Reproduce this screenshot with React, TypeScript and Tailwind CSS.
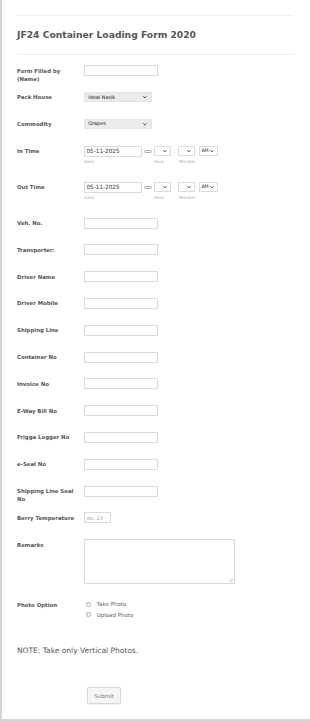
import React from "react";

type RowProps = {
  label: string;
  h?: string;
  children: React.ReactNode;
};

const Row: React.FC<RowProps> = ({ label, h = "h-[26.8px]", children }) => (
  <div className={`flex items-start pt-[8px] ${h}`}>
    <label className="w-[67px] shrink-0 pr-[5px] pt-[1.3px] text-[5.4px] font-bold leading-[8px] text-[#555]">
      {label}
    </label>
    {children}
  </div>
);

const Chevron = () => (
  <svg width="3.6" height="2.4" viewBox="0 0 6 4" className="shrink-0">
    <path d="M0.7 0.7 L3 3.1 L5.3 0.7" fill="none" stroke="#222" strokeWidth="1.6" />
  </svg>
);

const TextInput: React.FC<{ placeholder?: string; w?: string }> = ({ placeholder, w = "w-[73.7px]" }) => (
  <input
    placeholder={placeholder}
    className={`h-[11px] ${w} border border-[#dadada] bg-white px-[2px] text-[5.2px] text-[#333] outline-none placeholder:text-[#aaa]`}
  />
);

const SelectBox: React.FC<{ value: string }> = ({ value }) => (
  <div className="flex h-[10px] w-[67.7px] items-center justify-between border border-[#e2e2e2] bg-[#ebebeb] pl-[3.3px] pr-[4px]">
    <span className="text-[4.9px] leading-none text-[#111]">{value}</span>
    <Chevron />
  </div>
);

const MiniSelect: React.FC<{ w: string; value?: string }> = ({ w, value }) => (
  <div className={`flex h-[10.7px] ${w} items-center justify-end gap-[1.5px] border border-[#dcdcdc] bg-white pr-[3px]`}>
    {value && <span className="text-[4.7px] leading-none text-[#333]">{value}</span>}
    <Chevron />
  </div>
);

const SubLabel: React.FC<{ text: string; className?: string }> = ({ text, className = "" }) => (
  <span className={`mt-[2.5px] block text-[4.2px] leading-[5px] text-[#aaa] ${className}`}>{text}</span>
);

const TimeField = () => (
  <div className="flex items-start">
    <div className="flex flex-col">
      <input
        readOnly
        defaultValue="05-11-2025"
        className="h-[11px] w-[57.7px] border border-[#dadada] bg-white px-[1.5px] text-[5.7px] text-[#333] outline-none"
      />
      <SubLabel text="Date" />
    </div>
    <div className="ml-[2.3px] mt-[4px] h-[3px] w-[8.4px] rounded-full border border-[#aaa]" />
    <div className="ml-[1.6px] flex flex-col">
      <MiniSelect w="w-[17px]" />
      <SubLabel text="Hour" />
    </div>
    <span className="w-[6.7px] text-center text-[5px] leading-[10px] text-[#999]">:</span>
    <div className="flex flex-col">
      <MiniSelect w="w-[17.3px]" />
      <SubLabel text="Minutes" className="pl-[1.3px]" />
    </div>
    <div className="ml-[3.3px]">
      <MiniSelect w="w-[19px]" value="AM" />
    </div>
  </div>
);

const textRows = [
  "Veh. No.",
  "Transporter:",
  "Driver Name",
  "Driver Mobile",
  "Shipping Line",
  "Container No",
  "Invoice No",
  "E-Way Bill No",
  "Frigga Logger No",
  "e-Seal No",
  "Shipping Line Seal No",
];

const Radio: React.FC<{ text: string }> = ({ text }) => (
  <div className="flex h-[10.3px] items-center">
    <div className="h-[5.4px] w-[5.4px] rounded-full border border-[#a5a5a5] bg-white" />
    <span className="ml-[5.3px] text-[5.5px] leading-[10.3px] text-[#666]">{text}</span>
  </div>
);

export default function App() {
  return (
    <div className="h-[721px] w-[310px] border-b-2 border-l-2 border-[#d6d6d6] bg-white pl-[15px] pr-[16px] pt-[15px] font-['DejaVu_Sans',Verdana,sans-serif]">
      <div className="border-t border-[#eeeeee]" />
      <h1 className="pb-[13.5px] pt-[12.5px] text-[9.2px] font-bold leading-[12px] text-[#555]">
        JF24 Container Loading Form 2020
      </h1>
      <div className="border-t border-[#eeeeee]" />

      <div className="pt-[2.3px]">
        <Row label="Form Filled by (Name)">
          <TextInput />
        </Row>
        <Row label="Pack House">
          <SelectBox value="Ideal Nasik" />
        </Row>
        <Row label="Commodity">
          <SelectBox value="Grapes" />
        </Row>
        <Row label="In Time" h="h-[36px]">
          <TimeField />
        </Row>
        <Row label="Out Time" h="h-[36px]">
          <TimeField />
        </Row>
        {textRows.map((label) => (
          <Row key={label} label={label}>
            <TextInput />
          </Row>
        ))}
        <Row label="Berry Temperature">
          <TextInput placeholder="ex: 23" w="w-[26.7px]" />
        </Row>
        <Row label="Remarks" h="h-[52.7px]">
          <div className="relative h-[44.7px] w-[151px] border border-[#dadada] bg-white">
            <svg width="4" height="4" viewBox="0 0 4 4" className="absolute bottom-[1px] right-[1px]">
              <path d="M0.5 3.8 L3.8 0.5 M2 3.8 L3.8 2" stroke="#999" strokeWidth="0.6" />
            </svg>
          </div>
        </Row>

        <div className="mt-[15.3px] flex items-start">
          <label className="w-[67px] shrink-0 pt-[2.1px] text-[5.4px] font-bold leading-[8px] text-[#555]">
            Photo Option
          </label>
          <div className="ml-[2px] flex flex-col">
            <Radio text="Take Photo" />
            <Radio text="Upload Photo" />
          </div>
        </div>

        <p className="mt-[26.2px] text-[7.5px] leading-[10px] text-[#555]">NOTE: Take only Vertical Photos.</p>

        <button className="ml-[70px] mt-[31.3px] h-[17px] w-[34px] rounded-[1.5px] border border-[#d6d6d6] bg-[#f5f5f5] text-[5.5px] text-[#777] shadow-[0_1px_1px_rgba(0,0,0,0.06)]">
          Submit
        </button>
      </div>
    </div>
  );
}
